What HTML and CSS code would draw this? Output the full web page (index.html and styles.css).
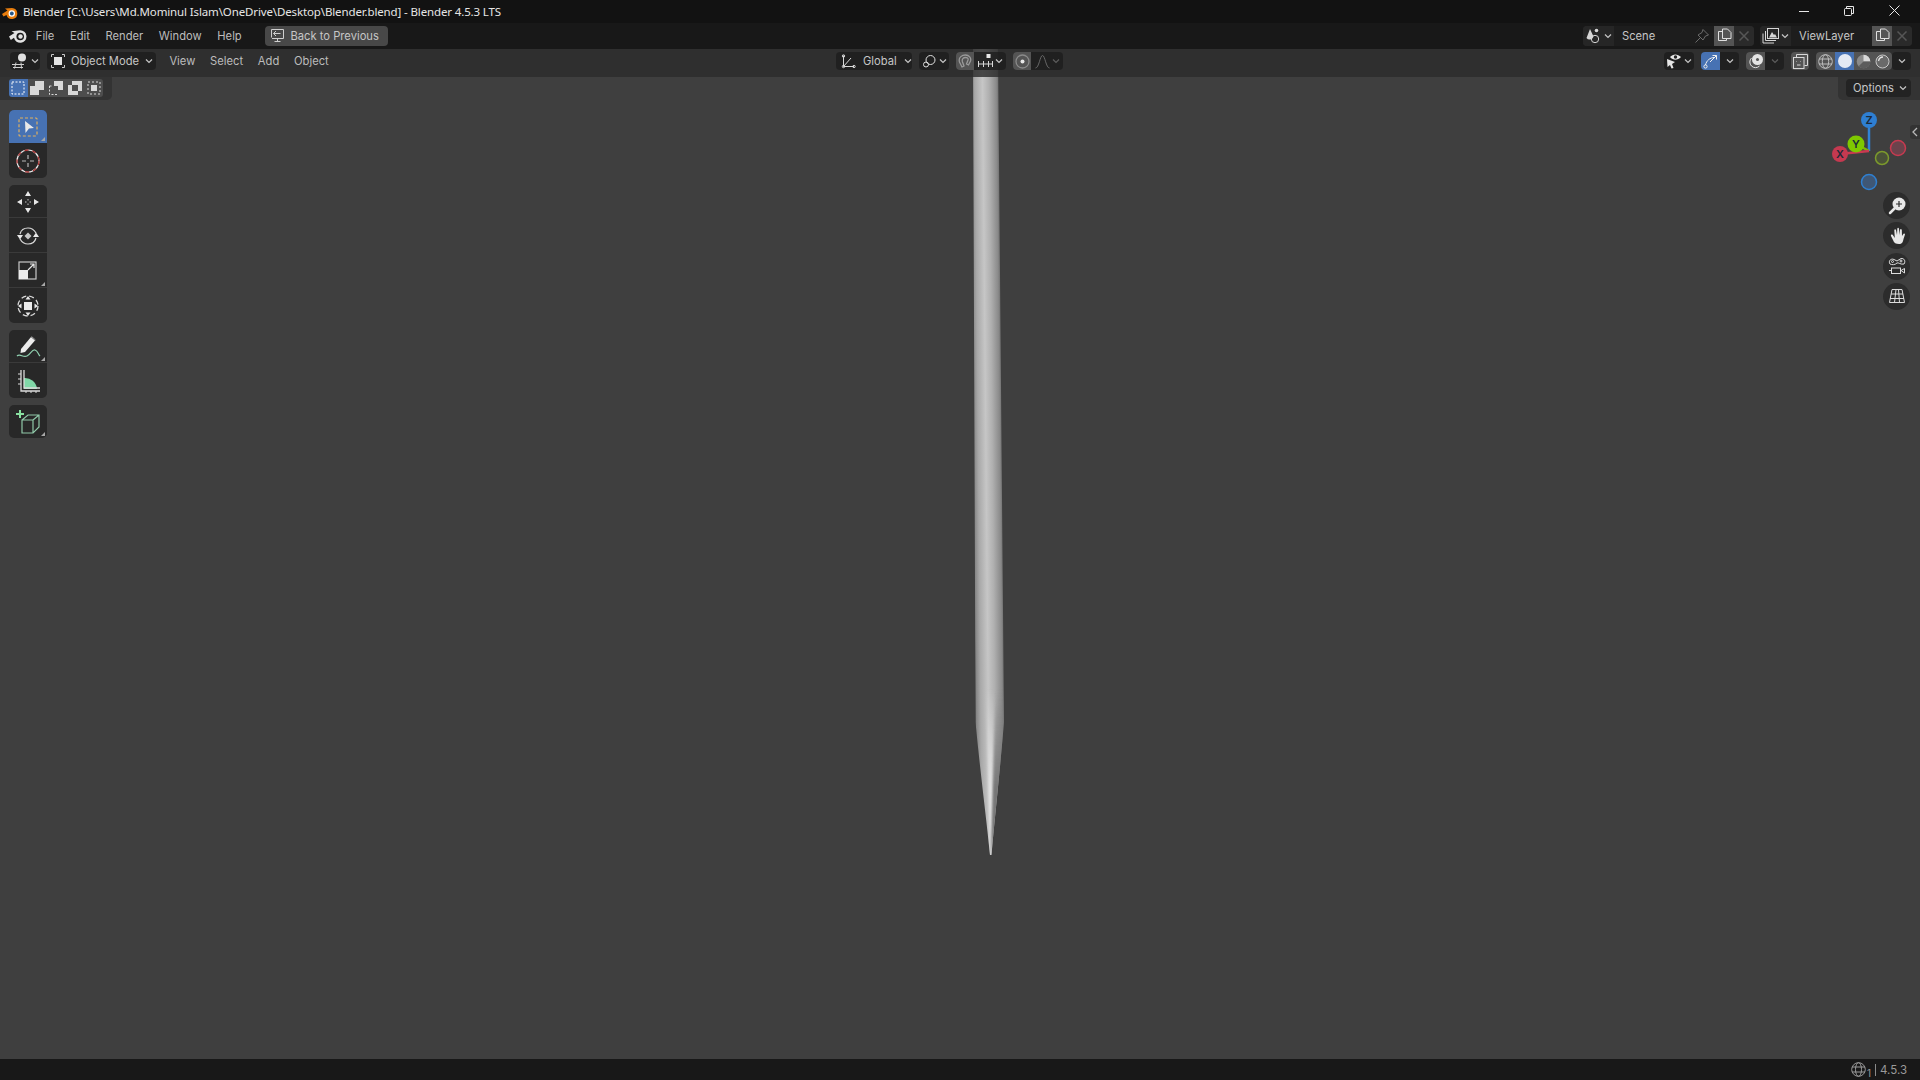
FILE: index.html
```html
<!DOCTYPE html>
<html>

<head>
  <meta charset="utf-8" />
  <title>Blender</title>
  <link rel="stylesheet" href="styles.css">
</head>

<body>
  <!-- window title -->
  <div class="titlebar">
    <svg class="title-logo" width="16" height="16" viewBox="0 0 16 16">
      <path d="M0 10 L5.500 6.500 L3 4.500 L10 4 A5.500 5.500 0 1 1 4.500 11 L1.500 12.500 Z" fill="#e87d0d" />
      <circle cx="9.800" cy="9.500" r="3.200" fill="#fff" />
      <circle cx="9.800" cy="9.500" r="1.900" fill="#265787" />
    </svg>
    <span class="title-text">Blender [C:\Users\Md.Mominul Islam\OneDrive\Desktop\Blender.blend] - Blender 4.5.3 LTS</span>
    <div class="win-btns">
      <svg width="10" height="10" viewBox="0 0 10 10"><path d="M0 5.500H10" stroke="#e8e8e8" /></svg>
      <svg width="10" height="10" viewBox="0 0 10 10" fill="none" stroke="#e8e8e8"><rect x=".5" y="2.500" width="7" height="7" rx="1" /><path d="M2.500 2.500V.5H9.500V7.500H7.500" /></svg>
      <svg width="11" height="11" viewBox="0 0 11 11"><path d="M.5 .5L10.500 10.500M10.500 .5L.5 10.500" stroke="#e8e8e8" /></svg>
    </div>
  </div>

  <!-- top bar -->
  <div class="topbar">
    <svg class="bl-logo" width="18" height="15" viewBox="0 0 18 15">
      <path d="M0 8.500 L5.500 5 L2.500 3.200 L11 2.200 A6.300 6.300 0 1 1 5 9.800 L1.800 12 Z" fill="#e2e2e2" />
      <circle cx="11.200" cy="8.500" r="3.800" fill="#181818" />
      <circle cx="11.500" cy="8.500" r="2.200" fill="#e2e2e2" />
    </svg>
    <span class="menu-item file">File</span>
    <span class="menu-item">Edit</span>
    <span class="menu-item">Render</span>
    <span class="menu-item">Window</span>
    <span class="menu-item">Help</span>
    <div class="back-btn">
      <svg width="15" height="15" viewBox="0 0 15 15" fill="none" stroke="#cfcfcf">
        <path d="M1.500 9.500V1.500H13.500V10.500H2M7.500 10.500V13.500M4.500 13.500H10.500M10.500 5.500H3.500M6 3L3.500 5.500L6 8" />
      </svg>
      <span>Back to Previous</span>
    </div>
    <div class="spacer"></div>

    <div class="id-group scene">
      <div class="id-type">
        <svg width="18" height="16" viewBox="0 0 18 16">
          <path d="M5 1L8.500 8.500A4 4 0 0 1 1.500 10Z" fill="#d6d6d6" />
          <circle cx="11.500" cy="2.500" r="1.800" fill="#d6d6d6" />
          <circle cx="10" cy="11" r="3.700" fill="none" stroke="#d6d6d6" />
        </svg>
        <svg class="chev" width="8" height="8" viewBox="0 0 8 8"><path d="M1 2.500L4 5.500L7 2.500" /></svg>
      </div>
      <div class="id-name">Scene
        <svg class="pin" width="16" height="16" viewBox="0 0 16 16" fill="none" stroke="#6c6c6c"><path d="M1.500 14.500L6 10M9 1.500L14.500 7L11.500 8L9 12L4 7L8 4.500Z" /></svg>
      </div>
      <div class="id-copy">
        <svg width="15" height="15" viewBox="0 0 15 15" fill="none" stroke="#e0e0e0"><path d="M5.500 3.500H1.500V12.500H9.500V10.500M5.500 1V10.500H14V4.500L10.500 1Z" /></svg>
      </div>
      <div class="id-x"><svg width="10" height="10" viewBox="0 0 10 10"><path d="M.5 .5L9.500 9.500M9.500 .5L.5 9.500" stroke="#565656" stroke-width="1.500" /></svg></div>
    </div>

    <div class="id-group layer">
      <div class="id-type">
        <svg width="18" height="16" viewBox="0 0 18 16" fill="none" stroke="#d6d6d6">
          <rect x="5.500" y=".5" width="11" height="10" />
          <path d="M3.500 3V12.500H14M1 5.500V15H12" />
          <path d="M7 9.500L10 4L12 7L13 6L15 9.500Z" fill="#d6d6d6" stroke="none" />
        </svg>
        <svg class="chev" width="8" height="8" viewBox="0 0 8 8"><path d="M1 2.500L4 5.500L7 2.500" /></svg>
      </div>
      <div class="id-name">ViewLayer</div>
      <div class="id-copy">
        <svg width="15" height="15" viewBox="0 0 15 15" fill="none" stroke="#e0e0e0"><path d="M5.500 3.500H1.500V12.500H9.500V10.500M5.500 1V10.500H14V4.500L10.500 1Z" /></svg>
      </div>
      <div class="id-x"><svg width="10" height="10" viewBox="0 0 10 10"><path d="M.5 .5L9.500 9.500M9.500 .5L.5 9.500" stroke="#565656" stroke-width="1.500" /></svg></div>
    </div>
  </div>

  <!-- 3d viewport, the header is see-through over it -->
  <div class="viewport">
    <svg class="scene-canvas" width="1920" height="1010" viewBox="0 49 1920 1010">
      <defs>
        <linearGradient id="shaft" gradientUnits="userSpaceOnUse" x1="972" y1="400" x2="1004" y2="399.700">
          <stop offset="0" stop-color="#4e4e4e" />
          <stop offset=".04" stop-color="#848484" />
          <stop offset=".18" stop-color="#a8a8a8" />
          <stop offset=".42" stop-color="#c6c6c6" />
          <stop offset=".62" stop-color="#b0b0b0" />
          <stop offset=".85" stop-color="#8a8a8a" />
          <stop offset="1" stop-color="#525252" />
        </linearGradient>
        <linearGradient id="tip-light" gradientUnits="userSpaceOnUse" x1="0" y1="690" x2="0" y2="790">
          <stop offset="0" stop-color="#e4e4e4" stop-opacity="0" />
          <stop offset="1" stop-color="#e4e4e4" />
        </linearGradient>
        <linearGradient id="tip-shade" gradientUnits="userSpaceOnUse" x1="0" y1="690" x2="0" y2="790">
          <stop offset="0" stop-color="#777" stop-opacity="0" />
          <stop offset="1" stop-color="#777" />
        </linearGradient>
        <filter id="soft" x="-100%" y="-10%" width="300%" height="120%">
          <feGaussianBlur stdDeviation="1.200" />
        </filter>
        <clipPath id="needle-clip">
          <path d="M973 49L998 49L1004 722C1000 770 995 815 991.500 855L990 855C986 815 980 770 975.500 722Z" />
        </clipPath>
      </defs>
      <path d="M973 49L998 49L1004 722C1000 770 995 815 991.500 855L990 855C986 815 980 770 975.500 722Z" fill="url(#shaft)" />
      <g clip-path="url(#needle-clip)">
        <path d="M986 690L994 690L991.500 855L990 855Z" fill="url(#tip-light)" filter="url(#soft)" />
        <path d="M1006 690L1000 800L991 855L996 690Z" fill="url(#tip-shade)" filter="url(#soft)" />
      </g>

      <!-- navigation gizmo -->
      <line x1="1869" y1="151" x2="1869" y2="120" stroke="#2f83d8" stroke-width="2.500" />
      <line x1="1869" y1="151" x2="1856" y2="144" stroke="#7fb800" stroke-width="2.500" />
      <line x1="1869" y1="151" x2="1840" y2="154" stroke="#c93a50" stroke-width="2.500" />
      <circle cx="1898" cy="148" r="7.500" fill="#6b434c" stroke="#c73a50" stroke-width="1.500" />
      <circle cx="1882" cy="158" r="6.500" fill="#4a5238" stroke="#7c9a2c" stroke-width="1.500" />
      <circle cx="1869" cy="182" r="7.500" fill="#3f5775" stroke="#2f7fd0" stroke-width="1.500" />
      <circle cx="1869" cy="120" r="8" fill="#2e7fd2" />
      <circle cx="1840" cy="154" r="8" fill="#c53950" />
      <circle cx="1856" cy="144" r="8.500" fill="#7fc800" />
      <text class="axis-label" x="1869" y="124">Z</text>
      <text class="axis-label" x="1840" y="158">X</text>
      <text class="axis-label" x="1856" y="148">Y</text>
    </svg>

    <div class="header">
      <div class="hdr-left">
        <div class="drop editor-type">
          <svg width="17" height="16" viewBox="0 0 17 16" fill="none" stroke="#cfcfcf">
            <path d="M0 11.500H12M1 14.500H11M4 9.500L2.500 15.500M9 9.500L9.500 15.500" />
            <circle cx="10" cy="4.500" r="4" fill="#e0e0e0" stroke="none" />
          </svg>
          <svg class="chev" width="8" height="8" viewBox="0 0 8 8"><path d="M1 2.500L4 5.500L7 2.500" /></svg>
        </div>
        <div class="drop mode">
          <svg width="14" height="14" viewBox="0 0 14 14" fill="none">
            <rect x="3" y="3" width="8" height="8" fill="#e4e4e4" />
            <path d="M.5 3V.5H3M11 .5H13.500V3M13.500 11V13.500H11M3 13.500H.5V11" stroke="#c8c8c8" />
          </svg>
          <span>Object Mode</span>
          <svg class="chev" width="8" height="8" viewBox="0 0 8 8"><path d="M1 2.500L4 5.500L7 2.500" /></svg>
        </div>
        <span class="menu-item view">View</span>
        <span class="menu-item">Select</span>
        <span class="menu-item">Add</span>
        <span class="menu-item">Object</span>
      </div>

      <div class="drop orient">
        <svg width="15" height="15" viewBox="0 0 15 15" fill="none" stroke="#d8d8d8"><path d="M2.500 1.500V12.500H13M2.500 12.500L10 4" /><circle cx="2.500" cy="2" r="1.200" /><circle cx="13" cy="12.500" r="1.200" /><circle cx="2.500" cy="12.500" r="1.200" /></svg>
        <span>Global</span>
        <svg class="chev" width="8" height="8" viewBox="0 0 8 8"><path d="M1 2.500L4 5.500L7 2.500" /></svg>
      </div>
      <div class="drop pivot">
        <svg width="15" height="15" viewBox="0 0 15 15" fill="none" stroke="#e0e0e0"><circle cx="8.500" cy="6" r="4.500" /><circle cx="4" cy="10.500" r="2.500" /></svg>
        <svg class="chev" width="8" height="8" viewBox="0 0 8 8"><path d="M1 2.500L4 5.500L7 2.500" /></svg>
      </div>
      <div class="snap-group">
        <div class="snap-on">
          <svg width="14" height="14" viewBox="0 0 14 14" fill="none" stroke="#9a9a9a" stroke-width="1.300"><path d="M4 13L1.500 8C0 3 4.500 1 7.500 1C11 1 13.500 4 12.500 7L10.500 11L8.500 10L10 6C10.500 4 9 3.500 7.500 3.500C5.500 3.500 3.500 5 4.500 8L6 12Z" /></svg>
        </div>
        <div class="snap-mode">
          <svg width="15" height="15" viewBox="0 0 15 15" fill="none"><rect x="8.500" y="0" width="4" height="4" fill="#e8e8e8" /><path d="M.5 7V13M5.500 7V13M10.500 7V13M14.500 7V13M.5 10H14.500" stroke="#d8d8d8" /></svg>
          <svg class="chev" width="8" height="8" viewBox="0 0 8 8"><path d="M1 2.500L4 5.500L7 2.500" /></svg>
        </div>
      </div>
      <div class="prop-group">
        <div class="prop-on">
          <svg width="15" height="15" viewBox="0 0 15 15" fill="none"><circle cx="7.500" cy="7.500" r="6.500" stroke="#8a8a8a" stroke-width="1.300" /><circle cx="7.500" cy="7.500" r="2" fill="#e8e8e8" /></svg>
        </div>
        <div class="prop-fall">
          <svg width="15" height="15" viewBox="0 0 15 15" fill="none" stroke="#686868"><path d="M.5 14C4 14 5 1.500 7.500 1.500C10 1.500 11 14 14.500 14" /></svg>
          <svg class="chev dim" width="8" height="8" viewBox="0 0 8 8"><path d="M1 2.500L4 5.500L7 2.500" /></svg>
        </div>
      </div>

      <div class="spacer"></div>

      <div class="drop vis">
        <svg width="16" height="16" viewBox="0 0 16 16">
          <path d="M1 6L9 9L6 11L7.500 15L5.500 15.500L4 12L1.500 14Z" fill="#e6e6e6" />
          <path d="M4 4C7 .5 11.500 .5 15 4C11.500 7.500 7 7.500 4 4Z" fill="#e6e6e6" />
          <circle cx="9.500" cy="4" r="1.700" fill="#232323" />
        </svg>
        <svg class="chev" width="8" height="8" viewBox="0 0 8 8"><path d="M1 2.500L4 5.500L7 2.500" /></svg>
      </div>
      <div class="gizmo-group">
        <div class="gizmo-on">
          <svg width="15" height="15" viewBox="0 0 15 15" fill="none" stroke="#f0f0f0"><path d="M2.500 11C3.500 6.500 7 3.500 11.500 3.500" /><circle cx="2.500" cy="12.500" r="1.600" /><path d="M9.500 1.500H13.500V5.500" /><path d="M7 8L13.500 1.500" /></svg>
        </div>
        <div class="gizmo-drop"><svg class="chev" width="8" height="8" viewBox="0 0 8 8"><path d="M1 2.500L4 5.500L7 2.500" /></svg></div>
      </div>
      <div class="overlay-group">
        <div class="overlay-on">
          <svg width="16" height="16" viewBox="0 0 16 16" fill="none"><circle cx="9.500" cy="6.500" r="5.500" fill="#e4e4e4" /><circle cx="9.500" cy="6.500" r="1.500" fill="#545454" /><path d="M3.500 5A5.500 5.500 0 1 0 11.500 13" stroke="#e4e4e4" /></svg>
        </div>
        <div class="overlay-drop"><svg class="chev dim" width="8" height="8" viewBox="0 0 8 8"><path d="M1 2.500L4 5.500L7 2.500" /></svg></div>
      </div>
      <div class="xray">
        <svg width="15" height="15" viewBox="0 0 15 15" fill="none" stroke="#d8d8d8"><rect x=".5" y="3.500" width="10.500" height="11" /><path d="M3.500 3V.5H14.500V11.500H11.500" /><path d="M3.500 7.500H4M7 7.500H7.500M4 11H7.500" /></svg>
      </div>
      <div class="shade-group">
        <div class="shade">
          <svg width="15" height="15" viewBox="0 0 15 15" fill="none" stroke="#bdbdbd"><circle cx="7.500" cy="7.500" r="6.800" /><ellipse cx="7.500" cy="7.500" rx="3.200" ry="6.800" /><path d="M1 5H14M1 10H14" /></svg>
        </div>
        <div class="shade active"><span class="solid-ball"></span></div>
        <div class="shade">
          <svg width="15" height="15" viewBox="0 0 15 15"><circle cx="7.500" cy="7.500" r="6.800" fill="#8a8a8a" /><path d="M7.500 .7A6.800 6.800 0 0 1 14.300 7.500H7.500Z" fill="#d8d8d8" /><path d="M7.500 7.500H14.300A6.800 6.800 0 0 1 2.700 12.300Z" fill="#5c5c5c" /></svg>
        </div>
        <div class="shade">
          <svg width="15" height="15" viewBox="0 0 15 15" fill="none"><circle cx="7.500" cy="7.500" r="6.500" stroke="#c8c8c8" fill="#6a6a6a" /><path d="M3.500 7C4 4.500 6 3 8 3" stroke="#e4e4e4" stroke-width="1.300" /></svg>
        </div>
      </div>
      <div class="drop shade-drop"><svg class="chev" width="8" height="8" viewBox="0 0 8 8"><path d="M1 2.500L4 5.500L7 2.500" /></svg></div>
    </div>

    <!-- tool settings -->
    <div class="tool-settings">
      <div class="sel-mode active">
        <svg width="14" height="14" viewBox="0 0 14 14" fill="none"><rect x="1" y="1" width="12" height="12" stroke="#fff" stroke-dasharray="2 1.500" /></svg>
      </div>
      <div class="sel-mode">
        <svg width="14" height="14" viewBox="0 0 14 14"><path d="M0 5H5V0H14V9H9V14H0Z" fill="#d8d8d8" /></svg>
      </div>
      <div class="sel-mode">
        <svg width="14" height="14" viewBox="0 0 14 14"><path d="M5 0H14V9H9V5H5Z" fill="#d8d8d8" /><path d="M.5 5V13.500H9M.5 5H3" fill="none" stroke="#d8d8d8" stroke-dasharray="2 1.500" /></svg>
      </div>
      <div class="sel-mode">
        <svg width="14" height="14" viewBox="0 0 14 14"><path fill-rule="evenodd" d="M4 0H14V10H10V14H0V4H4ZM4 4V10H10V4Z" fill="#d8d8d8" /></svg>
      </div>
      <div class="sel-mode">
        <svg width="14" height="14" viewBox="0 0 14 14" fill="none"><rect x="1" y="1" width="12" height="12" stroke="#d8d8d8" stroke-dasharray="2 2" /><rect x="4" y="4" width="6" height="6" fill="#d8d8d8" /></svg>
      </div>
    </div>

    <div class="options-wrap">
      <div class="drop options"><span>Options</span><svg class="chev" width="8" height="8" viewBox="0 0 8 8"><path d="M1 2.500L4 5.500L7 2.500" /></svg></div>
    </div>

    <!-- toolbar -->
    <div class="toolbar">
      <div class="tool-group">
        <div class="tool active corner">
          <svg width="24" height="24" viewBox="0 0 24 24" fill="none"><rect x="3" y="3" width="18" height="18" rx="1" stroke="#e0b060" stroke-dasharray="3 2" stroke-width="1.200" /><path d="M9 6L18 13L13 13.500L9.500 18Z" fill="#e8e8e8" /></svg>
        </div>
        <div class="tool">
          <svg width="24" height="24" viewBox="0 0 24 24" fill="none"><circle cx="12" cy="12" r="11" stroke="#e8e8e8" stroke-width="1.200" /><circle cx="12" cy="12" r="11" stroke="#a83232" stroke-width="1.300" stroke-dasharray="4 4" /><path d="M12 6V10M12 14V18M6 12H10M14 12H18" stroke="#b8b8b8" stroke-width="1.200" /></svg>
        </div>
      </div>
      <div class="tool-group">
        <div class="tool">
          <svg width="24" height="24" viewBox="0 0 24 24" fill="#e8e8e8"><path d="M12 1L15 6H9ZM12 23L9 18H15ZM1 12L6 9V15ZM23 12L18 15V9Z" /><path d="M12 9V10.500M12 13.500V15M9 12H10.500M13.500 12H15" stroke="#c8c8c8" /></svg>
        </div>
        <div class="tool">
          <svg width="24" height="24" viewBox="0 0 24 24" fill="none"><path d="M12 8.500L15.500 12L12 15.500L8.500 12Z" fill="#c8c8c8" /><path d="M4 10C5 6 8 4 12 4C15.500 4 18 5.500 20 9M20 14C19 18 16 20 12 20C8.500 20 6 18.500 4 15" stroke="#d8d8d8" stroke-width="1.200" /><path d="M1 11H7L4 15.500ZM17 13H23L20 8.500Z" fill="#e8e8e8" /></svg>
        </div>
        <div class="tool corner">
          <svg width="24" height="24" viewBox="0 0 24 24" fill="none"><rect x="3" y="3" width="17" height="17" stroke="#c8c8c8" stroke-width="1.200" /><rect x="3" y="11" width="9" height="9" fill="#ececec" /><path d="M12 11L18 5M14 5H18V9" stroke="#e8e8e8" stroke-width="1.200" /></svg>
        </div>
        <div class="tool">
          <svg width="24" height="24" viewBox="0 0 24 24" fill="none"><circle cx="12" cy="12" r="10" stroke="#d8d8d8" stroke-width="1.300" stroke-dasharray="5 3" /><rect x="8" y="8" width="8" height="8" fill="#ececec" /><path d="M12 2L14.500 5.500H9.500ZM12 22L9.500 18.500H14.500ZM2 12L5.500 9.500V14.500ZM22 12L18.500 14.500V9.500Z" fill="#e8e8e8" /></svg>
        </div>
      </div>
      <div class="tool-group">
        <div class="tool corner">
          <svg width="26" height="26" viewBox="0 0 26 26" fill="none"><path d="M6 15L16 3L20 6.500L10 18L5.500 19Z" fill="#ececec" /><path d="M16.500 2.500L20.500 6" stroke="#9a9a9a" /><path d="M2 22C5 19 8 24 12 22C16 20 17 15 20 16C23 17 23 20 25 22" stroke="#90d0b0" stroke-width="1.200" /></svg>
        </div>
        <div class="tool">
          <svg width="24" height="24" viewBox="0 0 24 24" fill="none"><path d="M8 9A12 12 0 0 1 21 20H8Z" fill="#80d8a8" /><path d="M5 1V22H24M8 1V19H24" stroke="#dcdcdc" stroke-width="1.300" /><path d="M2 5H5M2 10H5M2 15H5M10 22V24M15 22V24M20 22V24" stroke="#dcdcdc" /></svg>
        </div>
      </div>
      <div class="tool-group">
        <div class="tool corner">
          <svg width="26" height="26" viewBox="0 0 26 26" fill="none"><path d="M7 11L13 6H24V18L18 24H7ZM7 11H18V24M18 11L24 6" stroke="#8fc8a8" stroke-width="1.200" /><path d="M5 1V9M1 5H9" stroke="#88e0a0" stroke-width="2" /></svg>
        </div>
      </div>
    </div>

    <!-- right side buttons -->
    <div class="nav-btns">
      <div class="nav-btn">
        <svg width="18" height="18" viewBox="0 0 18 18"><circle cx="11" cy="7" r="6.500" fill="#e8e8e8" /><path d="M8 7H14M11 4V10" stroke="#2f2f2f" stroke-width="1.200" /><path d="M7 11L2 16" stroke="#e8e8e8" stroke-width="2.500" stroke-linecap="round" /></svg>
      </div>
      <div class="nav-btn">
        <svg width="18" height="18" viewBox="0 0 18 18"><path d="M3 9L5 13C6 16 8 17 11 17C14 17 15 15 15.500 12L17 7.500C17 6 15.500 6 15 7.500L14 9L13.800 3C13.500 1.800 12.300 1.800 12 3L11.500 8L11 1.800C10.700 .5 9.500 .5 9.300 1.800L9 8L8 3C7.700 1.800 6.300 2 6.300 3.300L6.800 11L4.800 8C3.800 7 2.500 7.800 3 9Z" fill="#e8e8e8" /></svg>
      </div>
      <div class="nav-btn">
        <svg width="18" height="18" viewBox="0 0 18 18" fill="none" stroke="#dcdcdc"><path d="M2 7C0 4 3 1 6 2.500L9 4L13 1.500C16 1 18 4 16 7C13 8 10 5 9 6C7 8 4 8 2 7Z" /><circle cx="4.500" cy="4.500" r="1" /><circle cx="13" cy="4" r="1" /><rect x="3.500" y="11" width="9" height="5.500" /><path d="M1 13.500H3.500M13 13.500L16.500 11.500V16Z" /></svg>
      </div>
      <div class="nav-btn">
        <svg width="18" height="18" viewBox="0 0 18 18" fill="none" stroke="#dcdcdc"><path d="M4 2.500H14L16.500 15.500H1.500ZM8 2.500L6.500 15.500M10.500 2.500L11.500 15.500M3 7H15M2 11.500H16" /></svg>
      </div>
    </div>
    <div class="side-tab"><svg width="8" height="10" viewBox="0 0 8 10" fill="none" stroke="#b8b8b8" stroke-width="1.300"><path d="M6 1L2 5L6 9" /></svg></div>
  </div>

  <!-- status bar -->
  <div class="statusbar">
    <svg width="15" height="15" viewBox="0 0 15 15" fill="none" stroke="#9a9a9a"><circle cx="7.500" cy="7.500" r="6.800" /><ellipse cx="7.500" cy="7.500" rx="3" ry="6.800" /><path d="M1 5H14M1 10H14" /></svg>
    <span class="net-count">1</span>
    <span class="status-sep"></span>
    <span>4.5.3</span>
  </div>
</body>

</html>
```

FILE: styles.css
```css
html,
body {
  margin: 0;
  padding: 0;
}

body {
  width: 1920px;
  height: 1080px;
  display: flex;
  flex-direction: column;
  overflow: hidden;
  background: #181818;
  font-family: "Inter", "Liberation Sans", sans-serif;
  font-size: 11.2px;
  color: #c6c6c6;
}

svg {
  display: block;
  flex-shrink: 0;
}

.spacer {
  flex-grow: 1;
}

.chev {
  fill: none;
  stroke: #c6c6c6;
  stroke-width: 1.200;
}

.chev.dim {
  stroke: #5c5c5c;
}

/* title bar */
.titlebar {
  height: 23px;
  display: flex;
  align-items: center;
  padding-left: 2px;
  background: #121212;
  color: #e6e6e6;
}

.title-logo {
  margin-right: 5px;
}

.title-text {
  font-family: "Noto Sans", sans-serif;
  font-size: 11.500px;
  letter-spacing: -0.13px;
}

.win-btns {
  margin-left: auto;
  display: flex;
  align-items: center;
  gap: 35px;
  padding: 0 20px 2px 0;
}

/* top bar */
.topbar {
  height: 26px;
  box-sizing: border-box;
  display: flex;
  align-items: center;
  padding-bottom: 1px;
  background: #181818;
}

.bl-logo {
  margin-left: 9px;
}

.menu-item {
  white-space: nowrap;
  padding: 0 7.800px;
  color: #bcbcbc;
}

.file {
  margin-left: 1px;
}

.back-btn {
  height: 20px;
  width: 123px;
  margin-left: 15px;
  box-sizing: border-box;
  display: flex;
  align-items: center;
  gap: 6px;
  padding-left: 5px;
  background: #484848;
  border-radius: 4px;
}

.id-group {
  height: 20px;
  display: flex;
  background: #282828;
  border-radius: 4px;
  overflow: hidden;
}

.id-group.scene {
  width: 171px;
}

.id-group.layer {
  width: 152px;
  margin: 0 8px 0 6px;
}

.id-type {
  width: 31px;
  display: flex;
  align-items: center;
  justify-content: center;
  gap: 1px;
  background: #262626;
}

.id-name {
  flex-grow: 1;
  display: flex;
  align-items: center;
  justify-content: space-between;
  padding: 0 4px 0 8px;
  background: #1d1d1d;
}

.id-copy {
  width: 20px;
  display: flex;
  align-items: center;
  justify-content: center;
  background: #545454;
}

.id-x {
  width: 20px;
  display: flex;
  align-items: center;
  justify-content: center;
  background: #2a2a2a;
}

/* viewport */
.viewport {
  flex-grow: 1;
  position: relative;
  background: #3f3f3f;
}

.scene-canvas {
  position: absolute;
  top: 0;
  left: 0;
}

.axis-label {
  font-family: "Inter", sans-serif;
  font-size: 11px;
  font-weight: 600;
  text-anchor: middle;
  fill: #1c2a3a;
}

.header {
  position: absolute;
  top: 0;
  left: 0;
  right: 0;
  height: 28px;
  box-sizing: border-box;
  display: flex;
  align-items: center;
  padding: 0 9px 4px 10px;
  background: rgba(44, 44, 44, 0.82);
}

.hdr-left {
  width: 826px;
  display: flex;
  align-items: center;
}

.hdr-left .menu-item {
  padding: 0 7.400px;
}

.drop {
  height: 18px;
  box-sizing: border-box;
  display: flex;
  align-items: center;
  white-space: nowrap;
  background: rgba(28, 28, 28, 0.75);
  border-radius: 4px;
}

.editor-type {
  width: 30px;
  justify-content: center;
  gap: 2px;
}

.mode {
  width: 109px;
  margin-left: 7px;
  padding: 0 5px 0 4px;
  gap: 6px;
}

.mode .chev,
.orient .chev,
.options .chev {
  margin-left: auto;
}

.hdr-left .view {
  margin-left: 6px;
}

.orient {
  width: 76px;
  padding: 0 5px 0 5px;
  gap: 7px;
}

.pivot {
  width: 30px;
  margin-left: 7px;
  justify-content: center;
  gap: 2px;
}

.snap-group,
.prop-group,
.gizmo-group,
.overlay-group,
.shade-group {
  height: 18px;
  display: flex;
  border-radius: 4px;
  overflow: hidden;
  background: rgba(28, 28, 28, 0.75);
}

.snap-group {
  width: 50px;
  margin-left: 7px;
}

.prop-group {
  width: 50px;
  margin-left: 7px;
}

.snap-on,
.prop-on {
  width: 18px;
  display: flex;
  align-items: center;
  justify-content: center;
  background: #545454;
}

.snap-mode,
.prop-fall {
  flex-grow: 1;
  display: flex;
  align-items: center;
  justify-content: center;
  gap: 2px;
}

.vis {
  width: 30px;
  justify-content: center;
  gap: 2px;
  background: #1f1f1f;
}

.gizmo-group {
  width: 38px;
  margin-left: 7px;
}

.gizmo-on {
  width: 19px;
  display: flex;
  align-items: center;
  justify-content: center;
  background: #4772b3;
}

.gizmo-drop,
.overlay-drop {
  flex-grow: 1;
  display: flex;
  align-items: center;
  justify-content: center;
}

.overlay-group {
  width: 38px;
  margin-left: 7px;
}

.overlay-on {
  width: 19px;
  display: flex;
  align-items: center;
  justify-content: center;
  background: #545454;
}

.xray {
  width: 18px;
  height: 18px;
  margin-left: 7px;
  display: flex;
  align-items: center;
  justify-content: center;
  background: #545454;
  border-radius: 4px;
}

.shade-group {
  margin-left: 7px;
}

.shade {
  width: 19px;
  display: flex;
  align-items: center;
  justify-content: center;
  background: #545454;
}

.shade.active {
  background: #4772b3;
}

.solid-ball {
  width: 14px;
  height: 14px;
  border-radius: 50%;
  background: #e4eaf4;
}

.shade-drop {
  width: 19px;
  justify-content: center;
}

/* tool settings row */
.tool-settings {
  position: absolute;
  top: 28px;
  left: 0;
  width: 112px;
  height: 23px;
  box-sizing: border-box;
  display: flex;
  align-items: flex-start;
  padding: 2px 0 0 9px;
  background: #333;
  border-radius: 0 0 5px 0;
}

.sel-mode {
  width: 18.800px;
  height: 18px;
  display: flex;
  align-items: center;
  justify-content: center;
  background: #4d4d4d;
}

.sel-mode.active {
  background: #4772b3;
  border-radius: 3px 0 0 3px;
}

.sel-mode:last-child {
  border-radius: 0 3px 3px 0;
}

.options-wrap {
  position: absolute;
  top: 28px;
  right: 0;
  width: 82px;
  height: 23px;
  box-sizing: border-box;
  padding: 2px 9px 0 8px;
  background: #333;
  border-radius: 0 0 0 5px;
}

.options {
  padding: 0 4px 0 7px;
  background: #232323;
}

/* left toolbar */
.toolbar {
  position: absolute;
  top: 61px;
  left: 9px;
  width: 38px;
  display: flex;
  flex-direction: column;
  gap: 7px;
}

.tool-group {
  display: flex;
  flex-direction: column;
  border-radius: 5px;
  overflow: hidden;
  background: #282828;
}

.tool {
  height: 35px;
  position: relative;
  display: flex;
  align-items: center;
  justify-content: center;
  box-shadow: inset 0 -1px 0 #3a3a3a;
}

.tool:first-child {
  height: 33px;
}

.tool:last-child {
  box-shadow: none;
}

.tool.active {
  background: #4772b3;
  box-shadow: none;
}

.tool.corner::after {
  content: "";
  position: absolute;
  right: 2px;
  bottom: 2px;
  border-style: solid;
  border-width: 0 0 4px 4px;
  border-color: transparent transparent #a8a8a8 transparent;
}

/* viewport nav buttons */
.nav-btns {
  position: absolute;
  top: 143px;
  right: 10px;
  display: flex;
  flex-direction: column;
  gap: 3.300px;
}

.nav-btn {
  width: 27px;
  height: 27px;
  display: flex;
  align-items: center;
  justify-content: center;
  background: #2c2c2c;
  border-radius: 50%;
}

.side-tab {
  position: absolute;
  top: 76px;
  right: 0;
  width: 10px;
  height: 14px;
  display: flex;
  align-items: center;
  justify-content: center;
  background: #333;
  border-radius: 3px 0 0 3px;
}

/* status bar */
.statusbar {
  height: 21px;
  display: flex;
  align-items: center;
  justify-content: flex-end;
  padding-right: 13px;
  background: #181818;
  color: #9a9a9a;
  font-size: 11.500px;
}

.net-count {
  align-self: flex-end;
  padding: 0 0 1px 1px;
  font-size: 10px;
}

.status-sep {
  width: 1px;
  height: 12px;
  margin: 0 4px 0 4px;
  background: #8a8a8a;
}
```
